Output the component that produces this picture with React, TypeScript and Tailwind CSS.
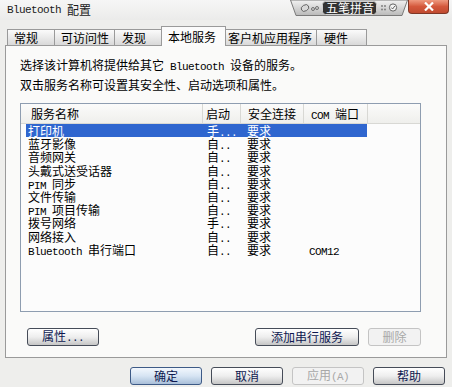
import React from "react";

function T({ s }: { s: string }) {
  const parts = s.split(/([\x20-\x7E]+)/).filter((p) => p.length > 0);
  return (
    <>
      {parts.map((p, i) =>
        /^[\x20-\x7E]+$/.test(p) ? (
          <span
            key={i}
            className="font-['Liberation_Mono',monospace] text-[11px] tracking-[-0.6px] whitespace-pre"
          >
            {p}
          </span>
        ) : (
          <span key={i}>{p}</span>
        )
      )}
    </>
  );
}

type Kind = "normal" | "default" | "disabled";
const btnCls: Record<Kind, string> = {
  normal:
    "border border-[#464c58] bg-linear-to-b from-[#ffffff] via-[#eeeeee] to-[#c6c6c6] text-[#0d1850]",
  default:
    "border border-[#3d5a86] bg-linear-to-b from-[#f2f7fd] via-[#d6e4f3] to-[#a9bfd9] text-[#0d1850]",
  disabled:
    "border border-[#c4c4c4] bg-[#f2f2f2] text-[#a8a8a8]",
};

function Btn({ children, w, kind = "normal" }: { children: React.ReactNode; w: string; kind?: Kind }) {
  return (
    <div
      className={`${w} h-[18px] rounded-[3px] flex items-center justify-center leading-[12px] ${btnCls[kind]}`}
    >
      {children}
    </div>
  );
}

const rows: [string, string, string, string][] = [
  ["打印机", "手...", "要求", ""],
  ["蓝牙影像", "自..", "要求", ""],
  ["音频网关", "自..", "要求", ""],
  ["头戴式送受话器", "自..", "要求", ""],
  ["PIM 同步", "自..", "要求", ""],
  ["文件传输", "自..", "要求", ""],
  ["PIM 项目传输", "自..", "要求", ""],
  ["拨号网络", "手..", "要求", ""],
  ["网络接入", "自..", "要求", ""],
  ["Bluetooth 串行端口", "自..", "要求", "COM12"],
];

export default function App() {
  return (
    <div className="relative w-[452px] h-[387px] overflow-hidden bg-[#eeeeec] text-[12px] text-black font-['Noto_Sans_CJK_SC',sans-serif]">
      {/* title bar */}
      <div className="h-[20px] bg-linear-to-b from-[#f6f6f6] to-[#ebebea] flex items-center pl-[7px] leading-[14px] text-[#1a1a1a]">
        <T s="Bluetooth 配置" />
      </div>

      {/* IME toolbar */}
      <div className="absolute left-[290px] top-0 w-[118px] h-[17px]">
        <svg width="118" height="17" viewBox="0 0 118 17" className="absolute inset-0">
          <defs>
            <linearGradient id="imeg" x1="0" y1="0" x2="0" y2="1">
              <stop offset="0" stopColor="#f2f2f2" />
              <stop offset="1" stopColor="#b9b9b9" />
            </linearGradient>
          </defs>
          <polygon points="0.5,0 117.5,0 112,15.5 6,15.5" fill="url(#imeg)" stroke="#7a7a7a" />
          <ellipse cx="15" cy="8" rx="4" ry="3" fill="#d8d8d8" stroke="#555" strokeWidth="0.8" transform="rotate(-30 15 8)" />
          <circle cx="23" cy="9" r="1.5" fill="none" stroke="#555" strokeWidth="0.8" />
          <circle cx="27" cy="8" r="1.5" fill="none" stroke="#555" strokeWidth="0.8" />
          <rect x="32.5" y="1.5" width="54" height="13" rx="3" fill="#333" stroke="#cfcfcf" />
          <circle cx="92" cy="6" r="0.9" fill="#777" />
          <circle cx="95" cy="6" r="0.9" fill="#777" />
          <circle cx="92" cy="9.5" r="0.9" fill="#777" />
          <circle cx="95" cy="9.5" r="0.9" fill="#777" />
          <circle cx="103" cy="7.5" r="3.6" fill="#f4f4f4" stroke="#555" strokeWidth="0.9" />
          <path d="M101.3 7.5 L102.6 9 L104.8 6" fill="none" stroke="#555" strokeWidth="0.9" />
        </svg>
        <div className="absolute left-[33px] top-[2px] w-[54px] h-[12px] flex items-center justify-center text-white text-[12px] leading-[12px]">
          五笔拼音
        </div>
      </div>

      {/* close button */}
      <div className="absolute left-[408px] top-0 w-[41px] h-[14px] rounded-b-[4px] border border-t-0 border-[#7e3626] bg-linear-to-b from-[#ee9a80] via-[#d4583c] to-[#c04a30] flex items-center justify-center">
        <svg width="10" height="9" viewBox="0 0 10 9">
          <path d="M1 0.5 L9 8.5 M9 0.5 L1 8.5" stroke="#ffffff" strokeWidth="2.2" />
        </svg>
      </div>

      {/* tabs */}
      <div className="h-[25px] pl-[7px] flex items-end relative z-10">
        <div className="w-[47px] h-[16px] border-l border-t border-[#9a9a9a] bg-linear-to-b from-[#fbfbfb] to-[#d9d9d9] pl-[6px] leading-[15px]">常规</div>
        <div className="w-[60px] h-[16px] border-l border-t border-[#9a9a9a] bg-linear-to-b from-[#fbfbfb] to-[#d9d9d9] pl-[6px] leading-[15px]">可访问性</div>
        <div className="w-[47px] h-[16px] border-l border-t border-[#9a9a9a] bg-linear-to-b from-[#fbfbfb] to-[#d9d9d9] pl-[7px] leading-[15px]">发现</div>
        <div className="w-[65px] h-[20px] -mb-px border-l border-t border-r border-[#9a9a9a] bg-[#fbfbfb] pl-[6px] leading-[19px]">本地服务</div>
        <div className="w-[90px] h-[16px] border-t border-[#9a9a9a] bg-linear-to-b from-[#fbfbfb] to-[#d9d9d9] pl-[2px] leading-[15px]">客户机应用程序</div>
        <div className="w-[51px] h-[16px] border-l border-t border-r border-[#9a9a9a] bg-linear-to-b from-[#fbfbfb] to-[#d9d9d9] pl-[7px] leading-[15px]">硬件</div>
      </div>

      {/* panel */}
      <div className="mx-[5px] h-[313px] border border-[#9a9a9a] bg-[#fafaf9] pl-[14px] pt-[10px]">
        <div className="leading-[18px]">
          <T s="选择该计算机将提供给其它 Bluetooth 设备的服务。" />
        </div>
        <div className="leading-[18px]">双击服务名称可设置其安全性、启动选项和属性。</div>

        {/* list */}
        <div className="mt-[9px] w-[401px] h-[209px] border border-[#8e9db0] bg-[#fcfcfc]">
          <div className="h-[20px] flex border-b border-[#d8d8d4] bg-linear-to-b from-[#fbfbfa] to-[#efefec] leading-[19px]">
            <div className="w-[182px] pl-[10px] border-r border-[#d8d8d4]">服务名称</div>
            <div className="w-[38px] pl-[3px] border-r border-[#d8d8d4]">启动</div>
            <div className="w-[63px] pl-[7px] border-r border-[#d8d8d4]">安全连接</div>
            <div className="w-[64px] pl-[7px] border-r border-[#d8d8d4]"><T s="COM 端口" /></div>
            <div className="flex-1" />
          </div>
          <div className="pl-[5px]">
            {rows.map((r, i) => (
              <div
                key={i}
                className={`w-[341px] h-[13.2px] flex leading-[13px] ${i === 0 ? "bg-[#2f66cf] text-white" : ""}`}
              >
                <div className="w-[177px] pl-[2px] whitespace-nowrap"><T s={r[0]} /></div>
                <div className="w-[38px] pl-[4px] whitespace-nowrap"><T s={r[1]} /></div>
                <div className="w-[63px] pl-[6px] whitespace-nowrap">{r[2]}</div>
                <div className="pl-[5px] whitespace-nowrap"><T s={r[3]} /></div>
              </div>
            ))}
          </div>
        </div>

        {/* panel buttons */}
        <div className="mt-[16px] w-[401px] flex">
          <div className="ml-[7px]">
            <Btn w="w-[72px]"><span>属性<T s="..." /></span></Btn>
          </div>
          <div className="ml-auto flex gap-[9px]">
            <Btn w="w-[104px]">添加串行服务</Btn>
            <Btn w="w-[53px]" kind="disabled">删除</Btn>
          </div>
        </div>
      </div>

      {/* dialog buttons */}
      <div className="mt-[9px] pl-[130px] flex gap-[9px]">
        <Btn w="w-[72px]" kind="default">确定</Btn>
        <Btn w="w-[72px]">取消</Btn>
        <Btn w="w-[72px]" kind="disabled"><span>应用<T s="(A)" /></span></Btn>
        <Btn w="w-[72px]">帮助</Btn>
      </div>
    </div>
  );
}
